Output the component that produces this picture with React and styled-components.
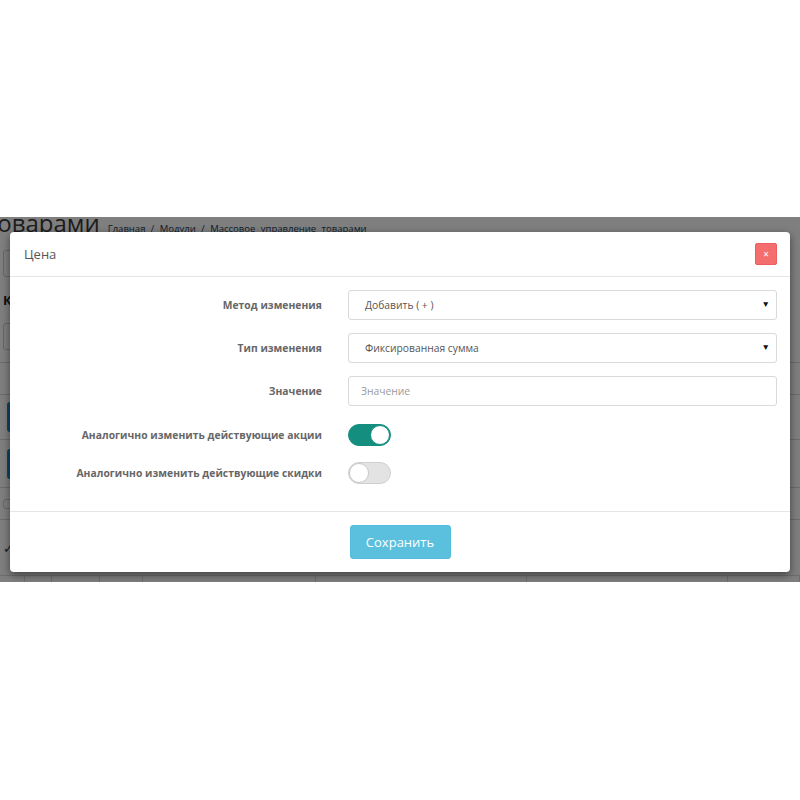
import React from "react";
import styled, { createGlobalStyle } from "styled-components";

const Global = createGlobalStyle`
  html, body { margin: 0; padding: 0; background: #fff; }
  body { font-family: "Open Sans", "Liberation Sans", sans-serif; }
`;

const Page = styled.div`
  width: 800px;
  height: 800px;
  background: #fff;
  overflow: hidden;
`;

const Stage = styled.div`
  margin-top: 217px;
  height: 365px;
  position: relative;
  overflow: hidden;
  background: #fff;
`;

/* ---------- admin page behind the modal ---------- */
const AdminPage = styled.div`
  display: flex;
  flex-direction: column;
  margin-top: -6px;
`;

const PageHeader = styled.div`
  display: flex;
  align-items: baseline;
  gap: 8px;
  height: 26px;
  margin-left: -14px;
`;

const PageTitle = styled.h1`
  margin: 0;
  font-size: 24px;
  font-weight: 400;
  color: #3a3a3a;
  line-height: 1;
`;

const Crumbs = styled.span`
  font-size: 9.5px;
  color: #1a3c5a;
  word-spacing: 3px;
`;

const SideRow = styled.div`
  box-sizing: border-box;
  display: flex;
  justify-content: space-between;
  height: ${(p) => p.$h}px;
  border-bottom: ${(p) => (p.$line ? "1px solid #d8d8d8" : "none")};
  align-items: center;
  padding: 0 3px;
`;

const GhostBox = styled.div`
  width: 30px;
  box-sizing: border-box;
  height: ${(p) => p.$h || 27}px;
  border: 1px solid #cfcfcf;
  border-radius: 3px;
`;

const SideLabel = styled.div`
  font-weight: 700;
  font-size: 13px;
  color: #222;
`;

const BlueBtn = styled.div`
  width: 40px;
  height: 30px;
  margin-left: 4px;
  border-radius: 3px;
  background: #1e8ec8;
`;

const Check = styled.span`
  font-size: 13px;
  color: #333;
`;

const TableRow = styled.div`
  display: grid;
  grid-template-columns: 25px 27px 48px 43px 173px 211px 201px 1fr;
  height: 12px;
  border-top: 1px solid #ddd;
  & > div { border-right: 1px solid #ddd; }
`;

/* ---------- modal ---------- */
const Overlay = styled.div`
  position: absolute;
  inset: 0;
  background: rgba(0, 0, 0, 0.5);
  padding: 15px 10px 0;
`;

const Dialog = styled.div`
  background: #fff;
  border-radius: 4px;
  box-shadow: 0 3px 9px rgba(0, 0, 0, 0.5);
  height: 340px;
  display: flex;
  flex-direction: column;
`;

const Header = styled.div`
  height: 44px;
  display: flex;
  align-items: center;
  justify-content: space-between;
  padding: 0 13px 0 14px;
  border-bottom: 1px solid #e5e5e5;
`;

const Title = styled.h4`
  margin: 0;
  font-size: 13px;
  font-weight: 400;
  color: #555;
`;

const CloseBtn = styled.button`
  width: 22px;
  height: 22px;
  padding: 0;
  border: 1px solid #ef5e5e;
  border-radius: 2px;
  background: #f56e6e;
  color: #fff;
  font-size: 10px;
  line-height: 1;
  font-family: "Open Sans", sans-serif;
  display: flex;
  align-items: center;
  justify-content: center;
`;

const Body = styled.div`
  padding: 13px 13px 0 15px;
  flex: 1;
  border-bottom: 1px solid #e5e5e5;
`;

const Row = styled.div`
  display: grid;
  grid-template-columns: 297px 1fr;
  column-gap: 26px;
  align-items: center;
  height: ${(p) => p.$h}px;
  margin-bottom: ${(p) => p.$mb}px;
`;

const Label = styled.label`
  text-align: right;
  font-size: 10.3px;
  font-weight: 700;
  color: #666;
  letter-spacing: 0.05px;
`;

const Select = styled.div`
  height: 30px;
  box-sizing: border-box;
  border: 1px solid #d9d9d9;
  border-radius: 3px;
  display: flex;
  align-items: center;
  justify-content: space-between;
  padding: 0 6px 0 16px;
  font-size: 10.3px;
  color: #555;
`;

const Caret = styled.span`
  font-size: 8.5px;
  color: #111;
  margin-top: -3px;
`;

const Input = styled.input`
  height: 30px;
  box-sizing: border-box;
  border: 1px solid #d9d9d9;
  border-radius: 3px;
  padding: 0 12px;
  font-size: 10.3px;
  font-family: "Open Sans", sans-serif;
  color: #555;
  &::placeholder { color: #9a9a9a; }
`;

const Toggle = styled.div`
  width: 43px;
  height: 22px;
  box-sizing: border-box;
  border-radius: 11px;
  background: ${(p) => (p.$on ? "#148f7f" : "#e3e3e3")};
  border: 1px solid ${(p) => (p.$on ? "#148f7f" : "#cfcfcf")};
  display: flex;
  justify-content: ${(p) => (p.$on ? "flex-end" : "flex-start")};
  align-items: center;
  padding: 0;
`;

const Knob = styled.div`
  width: 20px;
  height: 20px;
  box-sizing: border-box;
  border-radius: 50%;
  background: #fff;
  border: 1px solid ${(p) => (p.$on ? "#148f7f" : "#c9c9c9")};
`;

const Footer = styled.div`
  height: 60px;
  display: flex;
  justify-content: center;
  align-items: flex-start;
  padding-top: 13px;
  box-sizing: border-box;
`;

const SaveBtn = styled.button`
  width: 101px;
  height: 34px;
  border: 1px solid #52bcdc;
  border-radius: 3px;
  background: #5bc0de;
  color: #fff;
  font-size: 13px;
  font-family: "Open Sans", sans-serif;
`;

export default function App() {
  return (
    <Page>
      <Global />
      <Stage>
        <AdminPage>
          <PageHeader>
            <PageTitle>товарами</PageTitle>
            <Crumbs>Главная / Модули / Массовое управление товарами</Crumbs>
          </PageHeader>
          <SideRow $h={53}><GhostBox /><span /></SideRow>
          <SideRow $h={20}><SideLabel>К</SideLabel><span /></SideRow>
          <SideRow $h={53} $line><GhostBox /><span /></SideRow>
          <SideRow $h={32} $line><span /><span /></SideRow>
          <SideRow $h={45} $line><BlueBtn /><span /></SideRow>
          <SideRow $h={48} $line><BlueBtn /><span /></SideRow>
          <SideRow $h={32} $line><GhostBox $h={10} /><span /></SideRow>
          <SideRow $h={55}><Check>✓</Check><span /></SideRow>
          <TableRow>
            <div /><div /><div /><div /><div /><div /><div /><div />
          </TableRow>
        </AdminPage>
        <Overlay>
          <Dialog>
            <Header>
              <Title>Цена</Title>
              <CloseBtn>×</CloseBtn>
            </Header>
            <Body>
              <Row $h={30} $mb={13}>
                <Label>Метод изменения</Label>
                <Select>Добавить ( + )<Caret>▼</Caret></Select>
              </Row>
              <Row $h={30} $mb={13}>
                <Label>Тип изменения</Label>
                <Select>Фиксированная сумма<Caret>▼</Caret></Select>
              </Row>
              <Row $h={30} $mb={18}>
                <Label>Значение</Label>
                <Input placeholder="Значение" />
              </Row>
              <Row $h={22} $mb={16}>
                <Label>Аналогично изменить действующие акции</Label>
                <Toggle $on><Knob $on /></Toggle>
              </Row>
              <Row $h={22} $mb={0}>
                <Label>Аналогично изменить действующие скидки</Label>
                <Toggle><Knob /></Toggle>
              </Row>
            </Body>
            <Footer>
              <SaveBtn>Сохранить</SaveBtn>
            </Footer>
          </Dialog>
        </Overlay>
      </Stage>
    </Page>
  );
}
